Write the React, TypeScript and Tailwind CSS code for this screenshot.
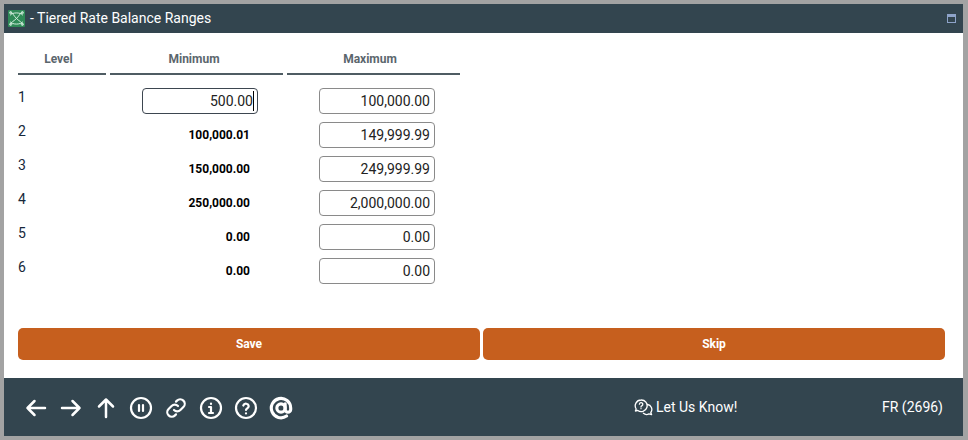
import React from "react";

const rows = [
  { level: "1", min: "500.00", max: "100,000.00", edit: true },
  { level: "2", min: "100,000.01", max: "149,999.99" },
  { level: "3", min: "150,000.00", max: "249,999.99" },
  { level: "4", min: "250,000.00", max: "2,000,000.00" },
  { level: "5", min: "0.00", max: "0.00" },
  { level: "6", min: "0.00", max: "0.00" },
];

const Ic = ({ children, w = 24, sw = 2.2 }: { children: React.ReactNode; w?: number; sw?: number }) => (
  <svg width={w} height="24" viewBox="0 0 24 24" fill="none" stroke="white" strokeWidth={sw} strokeLinecap="round" strokeLinejoin="round">
    {children}
  </svg>
);

function Header({ label, w, pr }: { label: string; w: string; pr: string }) {
  return (
    <div className={`${w} ${pr} h-[22px] border-b-2 border-[#4f5c63] text-center text-[12px] leading-[13px] font-bold text-[#5b666d]`}>
      {label}
    </div>
  );
}

export default function App() {
  return (
    <div className="w-[968px] h-[440px] bg-[#a3a3a3] p-[4px] pr-[5px] font-['Roboto',sans-serif] overflow-hidden">
      <div className="h-[432px] w-[959px] flex flex-col bg-white">
        <div className="h-[29px] shrink-0 bg-[#33454f] flex items-center pl-[4px] pr-[7px]">
          <svg width="17" height="17" viewBox="0 0 16 16" className="mr-[5px]">
            <rect width="16" height="16" rx="1" fill="#2f8a57" />
            <g fill="none" stroke="#d8efe2" strokeWidth="0.9">
              <path d="M2 2c3 1 3 3 6 6s5 3 6 6M14 2c-3 1-3 3-6 6s-5 3-6 6" />
              <path d="M2 5c2-3 10-3 12 0M2 11c2 3 10 3 12 0" />
              <circle cx="2.5" cy="2.5" r="1" />
              <circle cx="13.5" cy="2.5" r="1" />
              <circle cx="2.5" cy="13.5" r="1" />
              <circle cx="13.5" cy="13.5" r="1" />
            </g>
          </svg>
          <span className="text-white text-[14px] font-normal flex-1">- Tiered Rate Balance Ranges</span>
          <svg width="9" height="9" viewBox="0 0 9 9">
            <rect x="0.5" y="0.5" width="8" height="8" fill="none" stroke="#8ea3c9" />
            <rect x="0" y="0" width="9" height="3" fill="#8ea3c9" />
          </svg>
        </div>

        <div className="flex-1 flex flex-col pl-[14px] pr-[18px]">
          <div className="flex gap-[4px] pt-[20px]">
            <Header label="Level" w="w-[88px]" pr="pr-[7px]" />
            <Header label="Minimum" w="w-[173px]" pr="pr-[5px]" />
            <Header label="Maximum" w="w-[173px]" pr="pr-[7px]" />
          </div>
          <div className="flex flex-col gap-[8px] mt-[13px]">
            {rows.map((r) => (
              <div key={r.level} className="flex h-[26px] text-[14px]">
                <div className="w-[124px] text-[#16283a] leading-[18px]">{r.level}</div>
                <div className="w-[116px] flex justify-end items-center">
                  {r.edit ? (
                    <div className="w-[116px] h-[26px] border border-[#3d4650] rounded-[4px] pr-[3px] text-[14px] text-[#222] flex justify-end items-center">
                      {r.min}
                      <span className="w-px h-[20px] bg-black" />
                    </div>
                  ) : (
                    <span className="pr-[8px] text-[12px] font-bold text-black">{r.min}</span>
                  )}
                </div>
                <div className="ml-[61px] w-[116px] h-[26px] border border-[#8a8a8a] rounded-[4px] text-right pr-[4px] leading-[25px] text-[#222]">
                  {r.max}
                </div>
              </div>
            ))}
          </div>
          <div className="flex gap-[3px] mt-[44px]">
            <button className="w-[462px] h-[32px] bg-[#c65f1e] rounded-[5px] text-white text-[12px] font-bold">Save</button>
            <button className="w-[462px] h-[32px] bg-[#c65f1e] rounded-[5px] text-white text-[12px] font-bold">Skip</button>
          </div>
        </div>

        <div className="h-[58px] shrink-0 bg-[#33454f] flex items-center pl-[20px] pr-[20px] text-white text-[14px]">
          <div className="flex items-center gap-[11px] mt-[2px]">
            <Ic sw={2.5}><path d="M21 12H3.5M10.5 5l-7 7 7 7" /></Ic>
            <Ic sw={2.5}><path d="M3 12h17.5M13.5 5l7 7-7 7" /></Ic>
            <Ic sw={2.5}><path d="M12 21V3.5M5 10.5l7-7 7 7" /></Ic>
            <Ic>
              <circle cx="12" cy="12" r="10" />
              <path d="M10 9v6M14 9v6" />
            </Ic>
            <Ic>
              <path d="M10 14a4.5 4.5 0 0 0 6.4 0l3-3a4.5 4.5 0 0 0-6.4-6.4l-1 1" />
              <path d="M14 10a4.5 4.5 0 0 0-6.4 0l-3 3a4.5 4.5 0 0 0 6.4 6.4l1-1" />
            </Ic>
            <Ic>
              <circle cx="12" cy="12" r="10" />
              <path d="M10 11h2v6M10 17h4M12 7.5v.5" />
            </Ic>
            <Ic>
              <circle cx="12" cy="12" r="10" />
              <path d="M9.3 9.5a2.8 2.8 0 0 1 5.4.8c0 1.8-2.7 2.2-2.7 3.7M12 17.3v.2" />
            </Ic>
            <svg width="24" height="24" viewBox="0 0 26 26" fill="none" stroke="white" strokeWidth="3.4" strokeLinecap="round">
              <circle cx="13" cy="13" r="4.5" />
              <path d="M17.5 8.5v6a3 3 0 0 0 6 0V13a10.5 10.5 0 1 0-4.5 8.7" />
            </svg>
          </div>
          <div className="ml-[341px] flex items-center gap-[3px]">
            <svg width="19" height="17" viewBox="0 0 19 17" fill="none" stroke="white" strokeWidth="1.3" strokeLinecap="round" strokeLinejoin="round">
              <path d="M7 1a5.8 5.8 0 0 0-4.8 9L1.4 12l2.4-.6A5.8 5.8 0 1 0 7 1z" />
              <path d="M5.4 5.2a1.7 1.7 0 1 1 2.4 1.6c-.5.3-.8.6-.8 1.2M7 9.6v.1" />
              <path d="M13.4 5.5a5 5 0 0 1 3.4 8l.8 2.2-2.6-.8a5 5 0 0 1-5.6-.6" />
            </svg>
            <span>Let Us Know!</span>
          </div>
          <span className="ml-auto">FR (2696)</span>
        </div>
      </div>
    </div>
  );
}
